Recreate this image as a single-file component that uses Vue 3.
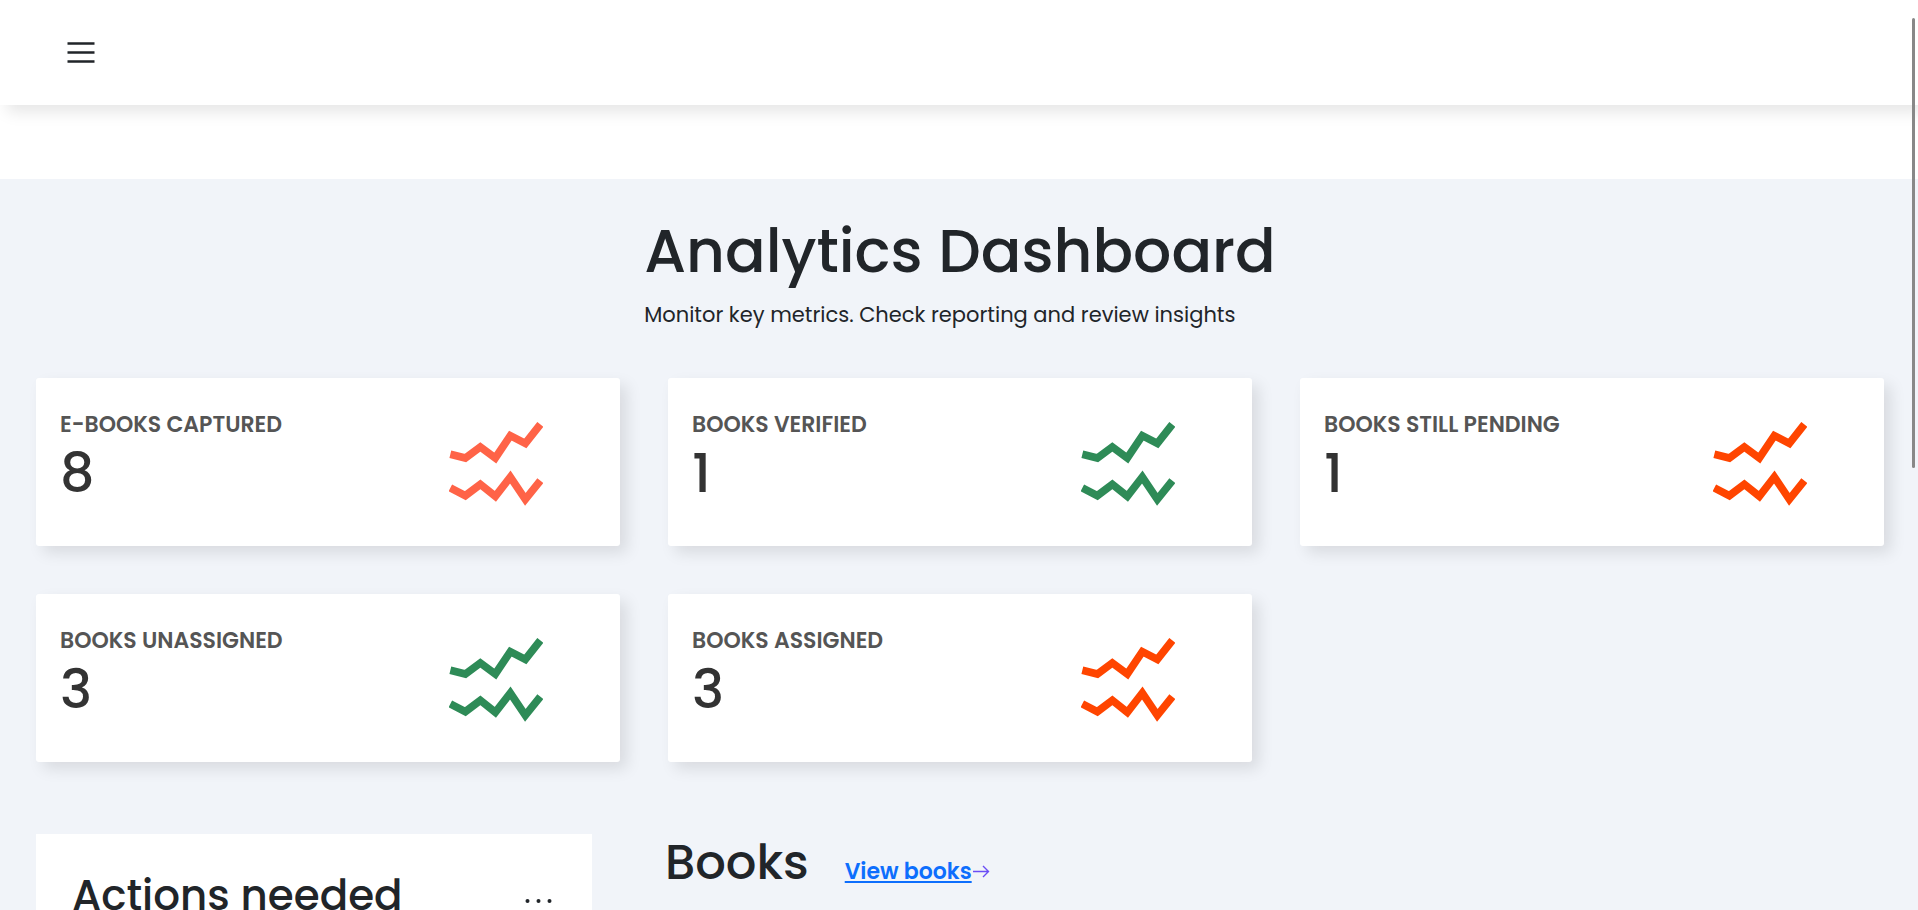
<script setup>
const stats = [
  { label: 'E-BOOKS CAPTURED', value: 8, tone: 'tomato' },
  { label: 'BOOKS VERIFIED', value: 1, tone: 'green' },
  { label: 'BOOKS STILL PENDING', value: 1, tone: 'orange' },
  { label: 'BOOKS UNASSIGNED', value: 3, tone: 'green' },
  { label: 'BOOKS ASSIGNED', value: 3, tone: 'orange' }
]
</script>

<template>
  <div class="page">
    <header class="topbar">
      <button class="menu" type="button" aria-label="Open menu">
        <svg viewBox="0 0 28 21" width="28" height="21" aria-hidden="true">
          <path d="M.5 1.5h27M.5 10.5h27M.5 19.5h27" />
        </svg>
      </button>
    </header>

    <main class="dashboard">
      <div class="intro">
        <h1>Analytics Dashboard</h1>
        <p>Monitor key metrics. Check reporting and review insights</p>
      </div>

      <section class="stats" aria-label="Key metrics">
        <article v-for="stat in stats" :key="stat.label" class="stat">
          <div>
            <h2 class="stat-label">{{ stat.label }}</h2>
            <p class="stat-value">{{ stat.value }}</p>
          </div>
          <svg class="trend" :class="stat.tone" viewBox="57 66 282 252" width="94" height="84" aria-hidden="true">
            <polyline points="61,163 106,174 151,141 196,174 241,107 286,130 331,73" />
            <polyline points="61,264 106,287 151,253 196,289 241,231 286,298 331,242" />
          </svg>
        </article>
      </section>

      <div class="lower">
        <section class="actions">
          <h2>Actions needed</h2>
          <button class="more" type="button" aria-label="More options">
            <svg viewBox="0 0 28 6" width="28" height="6" aria-hidden="true">
              <circle cx="2.5" cy="3" r="2" />
              <circle cx="13.5" cy="3" r="2" />
              <circle cx="24.5" cy="3" r="2" />
            </svg>
          </button>
        </section>
        <section class="books">
          <h2>Books</h2>
          <div class="view">
            <a href="#books">View books</a>
            <svg viewBox="0 0 18 14" width="18" height="14" aria-hidden="true">
              <path d="M1 6.5h15M11 1l5.5 5.5L11 12" />
            </svg>
          </div>
        </section>
      </div>
    </main>

    <div class="scroll-thumb" aria-hidden="true"></div>
  </div>
</template>

<style>
html {
  overflow: hidden;
}
</style>

<style scoped>
.page {
  height: 100vh;
  overflow: hidden;
  background: #fff;
  color: #212529;
  font-family: Poppins, Inter, "Noto Sans", sans-serif;
}
h1, h2, p {
  margin: 0;
  font-weight: 500;
}
button {
  display: flex;
  padding: 0;
  border: 0;
  background: none;
  color: inherit;
}
.topbar {
  display: flex;
  align-items: center;
  height: 105px;
  padding: 0 67px;
  background: #fff;
  box-shadow: 7px 7px 15px rgba(0, 0, 0, 0.1);
}
.menu path {
  fill: none;
  stroke: #212529;
  stroke-width: 2.3;
}
.dashboard {
  min-height: 100vh;
  margin-top: 74px;
  padding: 36px 34px 48px 36px;
  background: #f1f4f9;
}
.intro {
  width: fit-content;
  margin: 0 auto;
}
.intro h1 {
  font-size: 60px;
  line-height: 72px;
}
.intro p {
  margin-top: 12px;
  font-size: 21px;
  font-weight: 400;
  line-height: 32px;
}
.stats {
  display: grid;
  grid-template-columns: repeat(3, 1fr);
  gap: 48px;
  margin-top: 47px;
}
.stat {
  display: flex;
  justify-content: space-between;
  align-items: flex-start;
  min-height: 168px;
  box-sizing: border-box;
  padding: 31px 77px 31px 24px;
  border-radius: 3px;
  background: #fff;
  box-shadow: 7px 7px 15px rgba(0, 0, 0, 0.1);
}
.stat-label {
  color: #555;
  font-size: 22px;
  font-weight: 600;
  line-height: 32px;
}
.stat-value {
  color: #333;
  font-size: 54px;
  line-height: 64px;
}
.trend {
  margin-top: 13px;
  fill: none;
  stroke-width: 23;
}
.tomato { stroke: #ff6347; }
.green { stroke: #2e8b57; }
.orange { stroke: #ff4500; }
.lower {
  display: grid;
  grid-template-columns: 556fr 1219fr;
  gap: 73px;
  margin-top: 72px;
}
.actions {
  display: flex;
  justify-content: space-between;
  align-items: center;
  align-self: start;
  padding: 36px 39px 36px 36px;
  background: #fff;
}
.actions h2 {
  font-size: 42px;
  line-height: 52px;
}
.more {
  padding-top: 10px;
}
.more svg {
  fill: #212529;
}
.books {
  display: flex;
  align-items: baseline;
  gap: 36px;
}
.books h2 {
  font-size: 48px;
  line-height: 58px;
}
.view {
  display: flex;
  align-items: center;
}
.view a {
  color: #0d6efd;
  font-size: 22px;
  font-weight: 600;
}
.view path {
  fill: none;
  stroke: #6a4df5;
  stroke-width: 1.4;
}
.scroll-thumb {
  position: fixed;
  top: 18px;
  right: 3px;
  width: 3px;
  height: 450px;
  border-radius: 2px;
  background: #888;
}
</style>
